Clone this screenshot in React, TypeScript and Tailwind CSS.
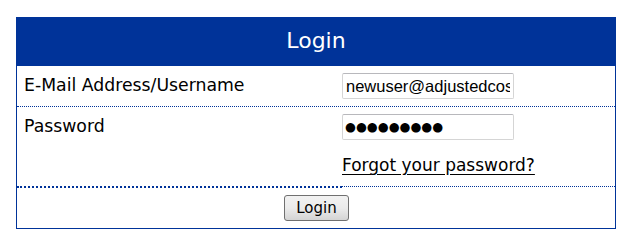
import React from "react";

export default function App() {
  const font = { fontFamily: '"DejaVu Sans", Verdana, sans-serif' };
  return (
    <div className="w-[633px] h-[243px] bg-white pt-[17px] pl-[16px]" style={font}>
      <div className="w-[600px] border border-[#003399] bg-white">
        <div className="h-[48px] bg-[#003399] flex items-center justify-center text-white text-[22px] leading-none pb-[2px]">
          Login
        </div>
        {/* Row 1 */}
        <div className="grid grid-cols-[325px_1fr] h-[41px] items-center border-b border-dotted border-[#003399]">
          <div className="pl-[7px] text-[17.3px] text-black leading-none">E-Mail Address/Username</div>
          <div>
            <input
              type="text"
              readOnly
              value="newuser@adjustedcost.com"
              className="w-[172px] h-[26px] border border-[#d5d5d5] border-t-[#b8b8bc] rounded-[2px] px-[3px] text-[16.5px] text-black outline-none bg-white"
              style={{ fontFamily: '"Liberation Sans", Arial, sans-serif' }}
            />
          </div>
        </div>
        {/* Row 2 */}
        <div className="grid grid-cols-[325px_1fr] items-start">
          <div className="h-[40px] flex items-center pl-[7px] text-[17.3px] text-black leading-none">Password</div>
          <div className="h-[40px] flex items-center">
            <div
              className="w-[172px] h-[26px] border border-[#d5d5d5] border-t-[#b8b8bc] rounded-[2px] pl-[2px] flex items-center text-[12.5px] text-black bg-white leading-none"
              style={{ fontFamily: '"DejaVu Sans", sans-serif' }}
            >
              ●●●●●●●●●
            </div>
          </div>
          <div className="h-[41px] border-b-2 border-dotted border-[#003399]"></div>
          <div className="h-[40px] flex items-center pb-[2px] border-b border-dotted border-[#003399]">
            <a href="#" className="text-[17px] text-black underline leading-none underline-offset-[3px]">
              Forgot your password?
            </a>
          </div>
        </div>
        {/* Row 3 */}
        <div className="h-[40px] flex items-center justify-center">
          <button
            className="w-[65px] h-[26px] border border-[#707070] rounded-[3px] bg-gradient-to-b from-[#f2f2f2] via-[#ebebeb] to-[#d4d4d4] text-[15px] text-black leading-none ml-[1px]"
            style={font}
          >
            Login
          </button>
        </div>
      </div>
    </div>
  );
}
